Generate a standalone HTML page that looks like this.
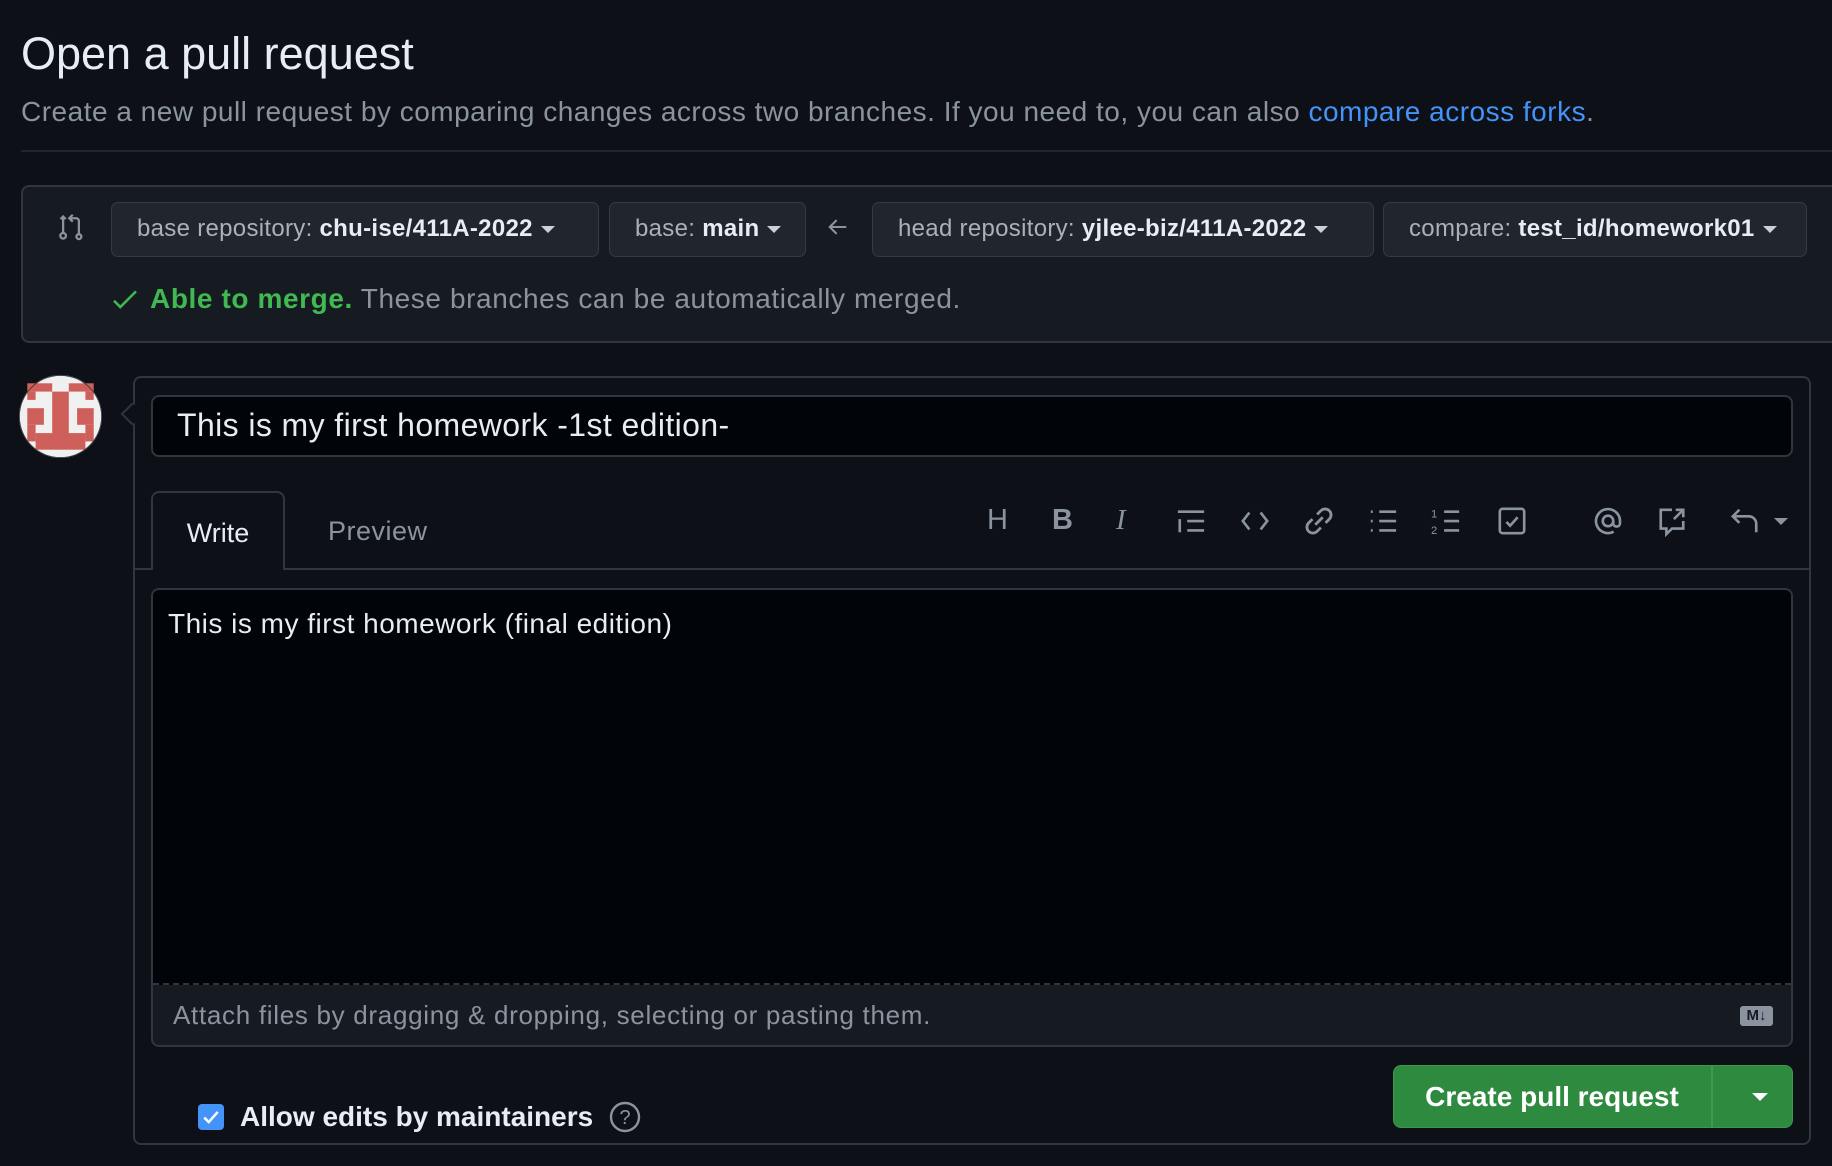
<!DOCTYPE html><html><head><style>
*{box-sizing:border-box;margin:0;padding:0}
body{width:1832px;height:1166px;background:#0d1117;font-family:"Liberation Sans",sans-serif;color:#c9d1d9;position:relative;overflow:hidden}
.a{position:absolute}
.btn{position:absolute;top:202px;height:55px;border:1.5px solid #363b42;border-radius:7px;background:#21262d;color:#a9b1ba;font-size:24px;letter-spacing:0.3px;line-height:52px;padding-left:25px;white-space:nowrap}
.btn b{color:#e6edf3;font-weight:bold}
.caret{display:inline-block;width:0;height:0;border-left:7px solid transparent;border-right:7px solid transparent;border-top:7px solid #c9d1d9;margin-left:8px;vertical-align:middle}
.ic{position:absolute;top:506px;width:30px;height:30px}
svg{overflow:visible}
</style></head><body>
<div class="a" style="left:21px;top:28px;font-size:45px;color:#e6edf3">Open a pull request</div>
<div class="a" style="left:21px;top:96px;font-size:28px;letter-spacing:0.5px;color:#8b949e">Create a new pull request by comparing changes across two branches. If you need to, you can also <span style="color:#4493f8">compare across forks</span>.</div>
<div class="a" style="left:21px;top:150px;width:1811px;height:2px;background:#21262d"></div>
<div class="a" style="left:21px;top:185px;width:1830px;height:158px;background:#161b22;border:2px solid #30363d;border-radius:8px"></div>
<svg class="a" style="left:57px;top:212px" width="28" height="30" viewBox="0 0 16 16" fill="none" stroke="#8b949e" stroke-width="1.3"><circle cx="3.5" cy="13" r="1.6"/><path d="M3.5 2v9.4M12.5 12V4.5a1.5 1.5 0 0 0-1.5-1.5H7M9 1L7 3l2 2"/><path d="M2 3.5l1.5-1.5 1.5 1.5"/><circle cx="12.5" cy="13.5" r="1.4"/></svg>
<div class="btn" style="left:111px;width:488px">base repository: <b>chu-ise/411A-2022</b><span class="caret"></span></div>
<div class="btn" style="left:609px;width:197px">base: <b>main</b><span class="caret"></span></div>
<svg class="a" style="left:826px;top:216px" width="24" height="22" viewBox="0 0 16 16" fill="none" stroke="#8b949e" stroke-width="1.5"><path d="M14 8H2.5M7 3L2 8l5 5"/></svg>
<div class="btn" style="left:872px;width:502px">head repository: <b>yjlee-biz/411A-2022</b><span class="caret"></span></div>
<div class="btn" style="left:1383px;width:424px">compare: <b>test_id/homework01</b><span class="caret"></span></div>
<svg class="a" style="left:112px;top:289px" width="26" height="22" viewBox="0 0 16 14" fill="none" stroke="#3fb950" stroke-width="1.6"><path d="M1 7.5l4 4L15 1.5"/></svg>
<div class="a" style="left:150px;top:283px;font-size:28px;letter-spacing:0.6px;color:#8b949e"><b style="color:#3fb950">Able to merge.</b> These branches can be automatically merged.</div>
<svg class="a" style="left:19px;top:375px" width="83" height="83" viewBox="0 0 10 10"><circle cx="5" cy="5" r="5" fill="#f0f0f0"/><g fill="#cf5f5a"><rect x="1" y="1" width="3" height="1"/><rect x="6" y="1" width="3" height="1"/><rect x="1" y="2" width="1" height="1"/><rect x="8" y="2" width="1" height="1"/><rect x="4" y="2" width="2" height="6"/><rect x="1" y="4" width="2" height="2"/><rect x="7" y="4" width="2" height="2"/><rect x="1" y="6" width="1" height="2"/><rect x="8" y="6" width="1" height="2"/><rect x="2" y="7" width="6" height="2"/></g><circle cx="5" cy="5" r="4.95" fill="none" stroke="#30363d" stroke-width=".1"/></svg>
<div class="a" style="left:133px;top:376px;width:1678px;height:769px;border:2px solid #30363d;border-radius:8px;background:#0d1117"></div>
<div class="a" style="left:124px;top:406px;width:16px;height:16px;transform:rotate(45deg);background:#0d1117;border-left:2px solid #30363d;border-bottom:2px solid #30363d"></div>
<div class="a" style="left:151px;top:395px;width:1642px;height:62px;border:2px solid #30363d;border-radius:8px;background:#010409;font-size:32px;letter-spacing:0.4px;line-height:56px;padding-left:24px;color:#e6edf3">This is my first homework -1st edition-</div>
<div class="a" style="left:135px;top:568px;width:1674px;height:2px;background:#30363d"></div>
<div class="a" style="left:151px;top:491px;width:134px;height:79px;border:2px solid #30363d;border-bottom:none;border-radius:8px 8px 0 0;background:#0d1117;font-size:27px;line-height:80px;text-align:center;color:#e6edf3">Write</div>
<div class="a" style="left:328px;top:491px;font-size:27px;letter-spacing:0.5px;line-height:80px;color:#8b949e">Preview</div>
<div class="a" style="left:987px;top:504px;font-size:29px;color:#8b949e">H</div>
<div class="a" style="left:1052px;top:504px;font-size:29px;color:#8b949e;font-weight:bold">B</div>
<div class="a" style="left:1116px;top:504px;font-size:29px;color:#8b949e;font-style:italic;font-family:'Liberation Serif',serif">I</div>
<svg class="ic" style="left:1176px" viewBox="0 0 16 16" fill="none" stroke="#8b949e" stroke-width="1.4"><path d="M1 3h14M6 8h9M6 13h9M2 7v7"/></svg>
<svg class="ic" style="left:1240px" viewBox="0 0 16 16" fill="none" stroke="#8b949e" stroke-width="1.4"><path d="M5 3.5L1.5 8 5 12.5M11 3.5L14.5 8 11 12.5"/></svg>
<svg class="ic" style="left:1304px" viewBox="0 0 16 16" fill="none" stroke="#8b949e" stroke-width="1.5"><path d="M7 4.5l2-2a3 3 0 0 1 4.5 4.5l-2 2M9 11.5l-2 2A3 3 0 0 1 2.5 9l2-2M6 10l4-4"/></svg>
<svg class="ic" style="left:1368px" viewBox="0 0 16 16" fill="none" stroke="#8b949e" stroke-width="1.4"><path d="M6 3h9M6 8h9M6 13h9M1.5 3h1M1.5 8h1M1.5 13h1"/></svg>
<svg class="ic" style="left:1431px" viewBox="0 0 16 16" fill="none" stroke="#8b949e" stroke-width="1.4"><path d="M7 3h8M7 8h8M7 13h8"/><text x="0" y="6" font-size="6" fill="#8b949e" stroke="none" font-family="Liberation Sans">1</text><text x="0" y="15" font-size="6" fill="#8b949e" stroke="none" font-family="Liberation Sans">2</text></svg>
<svg class="ic" style="left:1497px" viewBox="0 0 16 16" fill="none" stroke="#8b949e" stroke-width="1.4"><rect x="1.5" y="1.5" width="13" height="13" rx="1.5"/><path d="M5 8.5l2 2 4-4.5"/></svg>
<svg class="ic" style="left:1593px" viewBox="0 0 16 16" fill="none" stroke="#8b949e" stroke-width="1.4"><circle cx="8" cy="8" r="2.8"/><path d="M10.8 8v1.2a1.8 1.8 0 0 0 3.6 0V8A6.4 6.4 0 1 0 11 13.7"/></svg>
<svg class="ic" style="left:1657px" viewBox="0 0 16 16" fill="none" stroke="#8b949e" stroke-width="1.4"><path d="M8 2H2v10h3v3l3-3h6V8M10 2h4v4M14 2L9 7"/></svg>
<svg class="ic" style="left:1730px" viewBox="0 0 16 16" fill="none" stroke="#8b949e" stroke-width="1.4"><path d="M5 2L1.5 5.5 5 9M1.5 5.5H10a4 4 0 0 1 4 4V14"/></svg>
<span class="caret a" style="left:1766px;top:518px;border-top-color:#8b949e"></span>
<div class="a" style="left:151px;top:588px;width:1642px;height:459px;border:2px solid #30363d;border-radius:8px;background:#161b22"></div>
<div class="a" style="left:153px;top:590px;width:1638px;height:395px;background:#010409;border-bottom:2px dashed #30363d;border-radius:6px 6px 0 0;font-size:28px;letter-spacing:0.5px;padding:18px 15px;color:#e6edf3">This is my first homework (final edition)</div>
<div class="a" style="left:173px;top:1000px;font-size:26px;letter-spacing:0.7px;color:#8b949e">Attach files by dragging &amp; dropping, selecting or pasting them.</div>
<div class="a" style="left:1740px;top:1006px;width:33px;height:20px;background:#8b949e;border-radius:3px;color:#161b22;font-size:15px;font-weight:bold;line-height:20px;text-align:center">M↓</div>
<div class="a" style="left:198px;top:1104px;width:26px;height:26px;background:#4493f8;border-radius:4px"></div>
<svg class="a" style="left:202px;top:1108px" width="18" height="18" viewBox="0 0 16 16" fill="none" stroke="#fff" stroke-width="2.2"><path d="M2 8.5l4 4 8-9"/></svg>
<div class="a" style="left:240px;top:1101px;font-size:28px;font-weight:bold;color:#e6edf3">Allow edits by maintainers</div>
<svg class="a" style="left:609px;top:1101px" width="32" height="32" viewBox="0 0 16 16" fill="none" stroke="#8b949e" stroke-width="1.2"><circle cx="8" cy="8" r="7"/><text x="8" y="11.5" font-size="10" text-anchor="middle" fill="#8b949e" stroke="none" font-family="Liberation Sans">?</text></svg>
<div class="a" style="left:1393px;top:1065px;width:400px;height:63px;background:#2d8a3e;border:1.5px solid #3a9a4a;border-radius:8px"></div>
<div class="a" style="left:1711px;top:1066px;width:1.5px;height:61px;background:#3d9d4e"></div>
<div class="a" style="left:1393px;top:1065px;width:318px;height:63px;line-height:63px;text-align:center;font-size:28px;font-weight:bold;color:#fff">Create pull request</div>
<span class="caret a" style="left:1744px;top:1093px;border-top-color:#fff;border-left-width:8px;border-right-width:8px;border-top-width:8px"></span>
</body></html>
